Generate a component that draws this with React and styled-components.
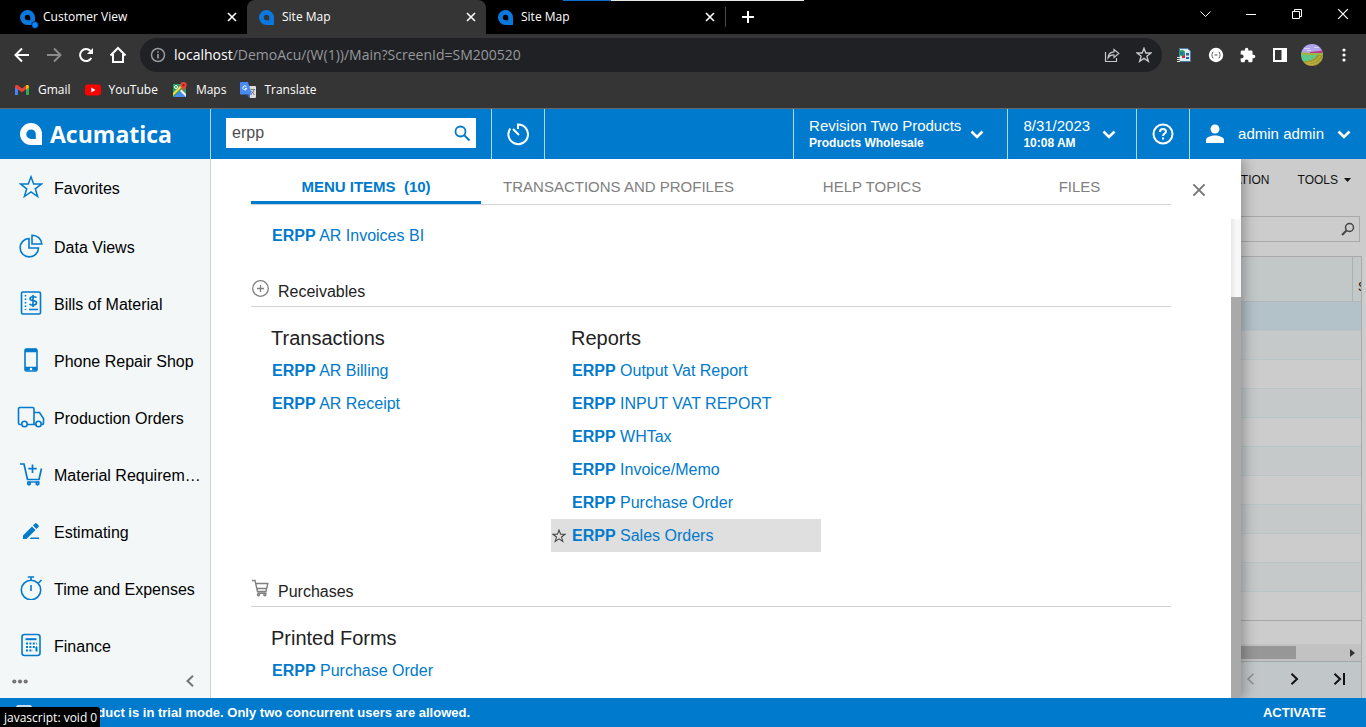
import React from "react";
import styled, { createGlobalStyle } from "styled-components";

const blue = "#007acc";
const uiFont = `"Open Sans", "Noto Sans", sans-serif`;
const appFont = `"Liberation Sans", Arial, sans-serif`;

const GlobalStyle = createGlobalStyle`
  *, *::before, *::after { box-sizing: border-box; }
  body { margin: 0; background: #fff; font-family: ${appFont}; }
  button { border: 0; padding: 0; margin: 0; background: none; font: inherit; color: inherit; cursor: pointer; }
  a { color: inherit; text-decoration: none; }
  svg { display: block; flex: none; }
  ul { list-style: none; margin: 0; padding: 0; }
`;

const Window = styled.div`
  position: relative;
  display: flex;
  flex-direction: column;
  height: 100vh;
  overflow: hidden;
`;

/* ---------- Browser frame ---------- */

const TabStrip = styled.div`
  display: flex;
  height: 34px;
  flex: none;
  background: #000;
  color: #fff;
  font: 12px/16px ${uiFont};
`;

const BrowserTab = styled.div`
  display: flex;
  align-items: center;
  gap: 8px;
  width: 239px;
  padding: 0 10px 0 12px;
  background: ${(p) => (p.$active ? "#353535" : "#000")};
  border-radius: ${(p) => (p.$active ? "8px 8px 0 0" : "0")};
  &:first-child { width: 247px; padding-left: 20px; }
`;

const TabTitle = styled.span`
  flex: 1;
  white-space: nowrap;
`;

const NewTab = styled.button`
  display: flex;
  align-items: center;
  justify-content: center;
  width: 44px;
  height: 20px;
  margin-top: 7px;
  border-left: 1px solid #4a4a4a;
`;

const WindowControls = styled.div`
  display: flex;
  height: 28px;
  margin-left: auto;
`;

const WindowControl = styled.button`
  display: flex;
  align-items: center;
  justify-content: center;
  width: 46px;
`;

const DragBar = styled.div`
  position: absolute;
  top: 0;
  left: 563px;
  width: 241px;
  height: 1px;
  background: linear-gradient(to right, #0a6fd0 20%, #e6e6e6 20%);
`;

const Toolbar = styled.div`
  display: flex;
  align-items: center;
  flex: none;
  height: 42px;
  padding: 0 6px;
  background: #353535;
  color: #fff;
`;

const ToolButton = styled.button`
  display: flex;
  align-items: center;
  justify-content: center;
  width: 32px;
  height: 32px;
  color: ${(p) => (p.$dim ? "#8b8b8b" : p.$soft ? "#c4c6c9" : "#fff")};
`;

const AddressBar = styled.div`
  display: flex;
  align-items: center;
  flex: 1;
  height: 34px;
  margin: 0 6px;
  padding: 0 2px 0 10px;
  border-radius: 17px;
  background: #202124;
  color: #96999d;
  font: 14px/20px ${uiFont};
`;

const Url = styled.span`
  flex: 1;
  margin-left: 8px;
  white-space: nowrap;
  b { color: #fff; font-weight: 400; }
`;

const Bookmarks = styled.nav`
  display: flex;
  align-items: center;
  gap: 14px;
  flex: none;
  height: 33px;
  padding: 0 14px 5px;
  border-bottom: 1px solid #666;
  background: #353535;
  color: #fff;
  font: 12px/16px ${uiFont};
`;

const Bookmark = styled.a`
  display: flex;
  align-items: center;
  gap: 8px;
`;

/* ---------- Application header ---------- */

const Header = styled.header`
  position: relative;
  z-index: 2;
  display: flex;
  flex: none;
  height: 50px;
  background: ${blue};
  color: #fff;
`;

const Brand = styled.a`
  display: flex;
  align-items: center;
  gap: 8px;
  width: 211px;
  padding-left: 20px;
  border-right: 1px solid #b3d7f0;
  font: 700 23px/32px ${uiFont};
`;

const SearchCell = styled.form`
  display: flex;
  align-items: center;
  width: 281px;
  padding: 0 15px 2px;
  border-right: 1px solid #b3d7f0;
`;

const SearchField = styled.label`
  display: flex;
  align-items: center;
  width: 100%;
  height: 30px;
  padding: 0 5px 0 6px;
  background: #fff;
  color: ${blue};
`;

const SearchInput = styled.input`
  flex: 1;
  min-width: 0;
  padding: 0;
  border: 0;
  outline: 0;
  background: none;
  color: #4d4d4d;
  font: 16px/20px ${appFont};
`;

const IconCell = styled.button`
  display: flex;
  align-items: center;
  justify-content: center;
  width: 53px;
  border-right: 1px solid #b3d7f0;
`;

const MenuCell = styled.button`
  display: flex;
  align-items: center;
  gap: ${(p) => p.$gap}px;
  padding: 0 ${(p) => p.$right}px 0 15px;
  border-left: 1px solid #b3d7f0;
  font-size: 15px;
  line-height: 18px;
  text-align: left;
  white-space: nowrap;
  small { display: block; font-size: 12px; line-height: 16px; font-weight: 700; }
`;

const Spacer = styled.div`
  flex: 1;
`;

/* ---------- Left navigation ---------- */

const Main = styled.div`
  display: flex;
  flex: 1;
  min-height: 0;
`;

const Sidebar = styled.nav`
  position: relative;
  z-index: 2;
  display: flex;
  flex-direction: column;
  flex: none;
  width: 211px;
  border-right: 1px solid #cdd1d4;
  background: #f3f7f8;
`;

const NavItem = styled.a`
  display: flex;
  align-items: center;
  gap: 8px;
  height: 57px;
  padding: 0 6px 0 16px;
  color: #000;
  font-size: 16px;
  line-height: 20px;
  li:first-child & { height: 60px; }
  svg { color: ${blue}; margin-bottom: 4px; }
  span { overflow: hidden; white-space: nowrap; text-overflow: ellipsis; }
`;

const IconSlot = styled.div`
  display: flex;
  justify-content: center;
  flex: none;
  width: 30px;
`;

const SidebarFoot = styled.div`
  display: flex;
  justify-content: space-between;
  height: 12px;
  padding: 0 15px 0 12px;
  color: #757575;
`;

/* ---------- Search results panel ---------- */

const Panel = styled.section`
  position: relative;
  z-index: 1;
  display: flex;
  flex-direction: column;
  flex: 1;
  min-width: 0;
  background: #fff;
  box-shadow: 3px 0 12px rgba(0, 0, 0, 0.3);
`;

const PanelHead = styled.div`
  display: flex;
  flex: none;
  height: 60px;
  padding-left: 40px;
`;

const PanelTabs = styled.div`
  display: flex;
  flex: 1;
  height: 46px;
  border-bottom: 1px solid #d0d3d8;
`;

const PanelTab = styled.button`
  flex: ${(p) => p.$share} 1 0;
  padding-top: 12px;
  border-bottom: 3px solid ${(p) => (p.$active ? blue : "transparent")};
  color: ${(p) => (p.$active ? blue : "#808080")};
  font-size: 15px;
  font-weight: ${(p) => (p.$active ? 700 : 400)};
  white-space: pre;
`;

const ClosePanel = styled.button`
  display: flex;
  align-items: center;
  flex: none;
  width: 70px;
  height: 62px;
  padding-left: 21px;
  color: #777;
`;

const PanelBody = styled.div`
  display: flex;
  flex: 1;
  min-height: 0;
`;

const Results = styled.div`
  flex: 1;
  min-width: 0;
  overflow: hidden;
  padding: 0 60px 0 40px;
`;

const ScrollTrack = styled.div`
  width: 10px;
  padding-top: 78px;
  background: linear-gradient(to right, #e6e6e6, #f7f7f7 50%);
`;

const ScrollThumb = styled.div`
  height: 100%;
  background: #a9a9a9;
`;

const SectionTitle = styled.h2`
  display: flex;
  align-items: flex-end;
  gap: 8px;
  height: 55px;
  margin: 0;
  padding-bottom: 4px;
  border-bottom: 1px solid #d0d3d8;
  color: #222;
  font-size: 16px;
  line-height: 20px;
  font-weight: 400;
  svg { width: 19px; color: #808080; margin-bottom: 4px; }
`;

const Columns = styled.div`
  display: flex;
  gap: 30px;
`;

const Column = styled.div`
  width: 270px;
`;

const ColumnTitle = styled.h3`
  height: 47px;
  margin: 0;
  padding: 19px 0 0 20px;
  color: #222;
  font-size: 20px;
  line-height: 24px;
  font-weight: 400;
`;

const ResultLink = styled.a`
  display: flex;
  align-items: center;
  height: 33px;
  padding-left: ${(p) => (p.$hover ? 1 : 21)}px;
  background: ${(p) => (p.$hover ? "#dfdfdf" : "none")};
  color: ${blue};
  font-size: 16px;
  line-height: 20px;
  white-space: pre;
  svg { margin-right: 6px; color: #444; }
`;

/* ---------- Dimmed screen behind the panel ---------- */

const Backdrop = styled.aside`
  display: flex;
  flex-direction: column;
  flex: none;
  width: 125px;
  padding-right: 4px;
  overflow: hidden;
  background: #ccc;
  color: #111;
  font-size: 12px;
`;

const BackdropTools = styled.div`
  display: flex;
  align-items: center;
  justify-content: flex-end;
  gap: 28px;
  height: 41px;
  padding-right: 11px;
`;

const BackdropTool = styled.button`
  display: flex;
  align-items: center;
  gap: 6px;
`;

const BackdropSearch = styled.div`
  display: flex;
  align-items: center;
  justify-content: flex-end;
  flex: none;
  height: 26px;
  margin: 16px 2px 14px 0;
  padding-right: 4px;
  border: 1px solid #a9a9a9;
  border-left: 0;
  color: #444;
`;

const Grid = styled.div`
  display: flex;
  flex-direction: column;
  flex: 1;
  border-top: 1px solid #a9a9a9;
  border-right: 1px solid #a9a9a9;
`;

const GridHead = styled.div`
  display: flex;
  justify-content: flex-end;
  height: 45px;
  background: #c2c7c8;
  border-bottom: 1px solid #b1b8bc;
`;

const GridHeadCell = styled.div`
  width: 9px;
  padding: 23px 0 0 5px;
  overflow: hidden;
  border-left: 1px solid #acb2b4;
`;

const GridRow = styled.div`
  height: 29px;
  border-bottom: 1px solid #b9c4c9;
  background: ${(p) => p.$tone};
  &:nth-child(12) { border-color: #a4a7a9; }
`;

const HScroll = styled.div`
  display: flex;
  align-items: center;
  justify-content: space-between;
  height: 17px;
  margin-top: 23px;
  padding-right: 6px;
  background: #c2c2c2;
`;

const HThumb = styled.div`
  width: 55px;
  height: 13px;
  background: #979797;
`;

const Pager = styled.div`
  display: flex;
  align-items: center;
  justify-content: space-between;
  flex: 1;
  padding: 0 15px 2px 5px;
  border-top: 1px solid #a4a7a9;
  background: #c1c6c8;
`;

/* ---------- Footer ---------- */

const TrialBar = styled.footer`
  position: relative;
  z-index: 2;
  display: flex;
  align-items: center;
  flex: none;
  gap: 14px;
  height: 29px;
  padding: 0 40px 0 16px;
  background: ${blue};
  color: #fff;
  font-size: 13px;
  font-weight: 700;
`;

const TrialText = styled.span`
  flex: 1;
`;

const StatusBubble = styled.div`
  position: absolute;
  z-index: 3;
  left: 0;
  bottom: 0;
  width: 100px;
  height: 20px;
  padding: 3px 0 0 4px;
  border-radius: 0 3px 0 0;
  background: #000;
  color: #fff;
  font: 12px/16px ${uiFont};
  white-space: nowrap;
`;

/* ---------- Icons ---------- */

const Icon = ({ w = 16, h = w, box = `0 0 ${w} ${h}`, sw = 1.5, fill = "none", children }) => (
  <svg width={w} height={h} viewBox={box} fill={fill} stroke={fill === "none" ? "currentColor" : "none"} strokeWidth={sw} aria-hidden="true">
    {children}
  </svg>
);

const Drop = ({ size, color, dot, small }) => (
  <svg width={size} height={size} viewBox="0 0 22 22" overflow="visible" aria-hidden="true">
    <path
      fill={color}
      fillRule="evenodd"
      d={small
        ? "M11 0a11 11 0 0 0 0 22h11V11A11 11 0 0 0 11 0zM11 7a4 4 0 0 1 4 4v4h-4a4 4 0 0 1 0-8z"
        : "M11 0a11 11 0 0 0 0 22h11V11A11 11 0 0 0 11 0zM11 6.500a4.700 4.700 0 0 1 4.800 4.700V16H11a4.700 4.700 0 0 1 0-9.500z"}
    />
    {dot && <circle cx="22" cy="22" r="5" fill="#0a84ff" stroke="#000" strokeWidth="1" />}
  </svg>
);

const Cross = ({ s = 10, sw = 1.6 }) => (
  <Icon w={s} box="0 0 10 10" sw={sw}><path d="M1 1l8 8M9 1L1 9" /></Icon>
);

const Chevron = () => (
  <Icon w={14} h={9} sw={2.6}><path d="M1.500 1.500L7 7l5.500-5.500" /></Icon>
);

const Star = ({ s, sw = 1.5 }) => (
  <Icon w={s} box="0 0 24 24" sw={sw}>
    <path d="M12 1.800l2.700 7.200h7.700l-6.100 4.800 2.300 7.700L12 17l-6.600 4.500 2.300-7.700L1.600 9h7.700z" />
  </Icon>
);

const navItems = [
  ["Favorites", <Star s={24} />],
  ["Data Views", (
    <Icon w={24} sw={1.6}>
      <path d="M10 4.500A9.200 9.200 0 1 0 19.500 14H10z" />
      <path d="M13 1.200V10h9.800A9.500 9.500 0 0 0 13 1.200z" />
    </Icon>
  )],
  ["Bills of Material", (
    <Icon w={24} sw={1.6}>
      <rect x="2.500" y="1" width="19" height="22" rx="1.500" />
      <path d="M6.500 4v15" strokeDasharray="1.500 2" />
      <path d="M17.500 6.500c-1-1-6.500-1.500-6.500 1.200 0 2.800 6.500 1 6.500 4s-5.500 2.800-7 1.300M14 4v12M10 18.500h9" />
    </Icon>
  )],
  ["Phone Repair Shop", (
    <Icon w={24} sw={1.6}>
      <rect x="6" y="1" width="12" height="22" rx="1.500" />
      <path d="M6 2.500h12M6 20.500h12" strokeWidth="3.600" />
      <circle cx="12" cy="21" r="1.300" fill="#fff" stroke="none" />
    </Icon>
  )],
  ["Production Orders", (
    <Icon w={28} h={22} sw={1.6}>
      <path d="M4.500 18.500H3a1.500 1.500 0 0 1-1.500-1.500V3A1.500 1.500 0 0 1 3 1.500h12.500A1.500 1.500 0 0 1 17 3v15.500h-7M17 6.500h5.500l4 6V17a1.500 1.500 0 0 1-1.500 1.500M17 18.500h2.500" />
      <circle cx="7.500" cy="18" r="2.700" /><circle cx="21.500" cy="18" r="2.700" />
    </Icon>
  )],
  ["Material Requirements", (
    <Icon w={24} sw={1.7}>
      <path d="M1 2h4l3.500 15.500h11.500L22.500 6.500M13.500 2.500v8.500M9.300 6.700h8.400" />
      <path d="M8.500 20h12" strokeWidth="1.400" />
      <circle cx="10" cy="21.500" r="1.300" /><circle cx="18.500" cy="21.500" r="1.300" />
    </Icon>
  )],
  ["Estimating", (
    <Icon w={24} fill="currentColor">
      <path d="M4 20v-3.500L13 7.500l3.500 3.500L7.500 20zM14 6.500l2-2a1.200 1.200 0 0 1 1.700 0l1.800 1.800a1.200 1.200 0 0 1 0 1.700l-2 2zM12 18.500h8V20h-9.500z" />
    </Icon>
  )],
  ["Time and Expenses", (
    <Icon w={24} sw={1.6}>
      <circle cx="12" cy="14" r="9.700" />
      <path d="M12 4.500V1M8.800 1h6.400M12 9v6M19.500 7l3-3" />
    </Icon>
  )],
  ["Finance", (
    <Icon w={24} sw={1.6}>
      <rect x="3" y="1.500" width="18" height="21" rx="2.500" />
      <path d="M6.500 6.200h11" strokeWidth="2" />
      <path d="M7 10.500h11M7 14h11M7 17.500h7" strokeDasharray="2 1.400" strokeWidth="2" />
      <path d="M17.500 14v4.500" strokeWidth="2" />
    </Icon>
  )],
];

const bookmarks = [
  ["Gmail", (
    <svg key="g" width="16" height="16" viewBox="0 0 16 16">
      <path fill="#4285f4" d="M1 5v8h3V7z" /><path fill="#34a853" d="M15 5v8h-3V7z" />
      <path fill="#ea4335" d="M1 4.500C1 2.800 2.800 2.500 3.800 3.300L8 6.500l4.200-3.200V7L8 10.300 1 5.500z" />
      <path fill="#fbbc04" d="M12 3.400c1.200-1 3-.4 3 1.200v1L12 7.500z" />
    </svg>
  )],
  ["YouTube", (
    <svg key="y" width="16" height="16" viewBox="0 0 16 16">
      <rect y="2.500" width="16" height="11" rx="3" fill="#f00" /><path fill="#fff" d="M6.300 5.600v4.800L10.500 8z" />
    </svg>
  )],
  ["Maps", (
    <svg key="m" width="16" height="16" viewBox="0 0 16 16">
      <path fill="#1fa463" d="M1 2h13v13H1z" /><path fill="#4a8af4" d="M2 15l6-6 6 6z" />
      <path fill="#ffd54b" d="M10 2L1 11v3l12-12z" /><path fill="#f5f5f5" d="M8 9l1.500-1.500L14 12v3z" />
      <path fill="#ea4335" d="M11.500 0a3.200 3.200 0 0 1 3.200 3.300c0 2.400-2.500 3.500-3.200 6.500-.7-3-3.200-4.100-3.200-6.500A3.200 3.200 0 0 1 11.500 0z" />
      <circle cx="11.500" cy="3.200" r="1.100" fill="#8c1a12" /><circle cx="4" cy="5" r="1.500" fill="none" stroke="#fff" />
    </svg>
  )],
  ["Translate", (
    <svg key="t" width="16" height="16" viewBox="0 0 16 16">
      <path fill="#ddd" d="M6 4h9a1 1 0 0 1 1 1v10a1 1 0 0 1-1 1h-5z" /><path fill="#4889f4" d="M1 0h7l4 12.500H1a1 1 0 0 1-1-1V1a1 1 0 0 1 1-1z" />
      <path fill="#3762c8" d="M7 12.500h3.500L9 16z" />
      <path fill="none" stroke="#fff" d="M6.500 4.700a2 2 0 1 0 .3 1.700H5" /><path fill="none" stroke="#6b7a80" d="M10.500 7.500H15M14 7.500c0 2-2 4-3 4.500M11.500 9l3 4" />
    </svg>
  )],
];

const panelTabs = [
  ["MENU ITEMS  (10)", 230],
  ["TRANSACTIONS AND PROFILES", 275],
  ["HELP TOPICS", 232],
  ["FILES", 183],
];

const rowTone = (i) => (i === 0 ? "#b3c1c8" : i % 2 ? "#c5c9ca" : "#ccc");

function Result({ text, hover }) {
  return (
    <ResultLink href="#" $hover={hover}>
      {hover && <Star s={14} sw={1.8} />}
      <span><b>ERPP</b> {text}</span>
    </ResultLink>
  );
}

function ResultColumn({ title, items, hover }) {
  return (
    <Column>
      {title && <ColumnTitle>{title}</ColumnTitle>}
      {items.map((t) => <Result key={t} text={t} hover={t === hover} />)}
    </Column>
  );
}

function BrowserFrame() {
  return (
    <>
      <TabStrip>
        {["Customer View", "Site Map", "Site Map"].map((t, i) => (
          <BrowserTab key={i} $active={i === 1}>
            <Drop size={15} color="#0b78e0" dot={i === 0} small />
            <TabTitle>{t}</TabTitle>
            <button aria-label="Close tab"><Cross /></button>
          </BrowserTab>
        ))}
        <NewTab aria-label="New tab"><Icon w={12} sw={2}><path d="M6 0v12M0 6h12" /></Icon></NewTab>
        <WindowControls>
          <WindowControl aria-label="Search tabs"><Icon w={11} h={6} sw={1}><path d="M.5.500l5 5 5-5" /></Icon></WindowControl>
          <WindowControl aria-label="Minimize"><Icon w={10} h={1} sw={1}><path d="M0 .5h10" /></Icon></WindowControl>
          <WindowControl aria-label="Restore"><Icon w={10} sw={1}><path d="M.5 2.500h7v7h-7zM2.500 2.500v-2h7v7h-2" /></Icon></WindowControl>
          <WindowControl aria-label="Close"><Cross s={12} sw={1} /></WindowControl>
        </WindowControls>
      </TabStrip>
      <DragBar />
      <Toolbar>
        <ToolButton aria-label="Back"><Icon w={16} sw={2}><path d="M15 8H2M8 1.500L1.500 8 8 14.500" /></Icon></ToolButton>
        <ToolButton $dim aria-label="Forward"><Icon w={16} sw={2}><path d="M1 8h13M8 1.500L14.500 8 8 14.500" /></Icon></ToolButton>
        <ToolButton aria-label="Reload"><Icon w={16} sw={2}><path d="M13.300 11A6 6 0 1 1 12.500 4" /><path d="M15 1v6H9z" fill="currentColor" stroke="none" /></Icon></ToolButton>
        <ToolButton aria-label="Home"><Icon w={18} h={18} sw={2}><path d="M1.500 9.500L9 2l7.500 7.500M4 8v8h10V8" /></Icon></ToolButton>
        <AddressBar>
          <Icon w={16} sw={1.5}><circle cx="8" cy="8" r="6.500" /><path d="M8 7v4.500M8 4.300v1.500" strokeWidth="1.700" /></Icon>
          <Url><b>localhost</b>/DemoAcu/(W(1))/Main?ScreenId=SM200520</Url>
          <ToolButton $soft aria-label="Share">
            <Icon w={16} sw={1.2}><path d="M1.500 5v9.500h11V11M10 2.500l4.800 4-4.800 4V8c-2.500-.2-4.500.6-6 2.800C4.300 7.500 6 5 10 4.800z" /></Icon>
          </ToolButton>
          <ToolButton $soft aria-label="Bookmark"><Star s={16} sw={2} /></ToolButton>
        </AddressBar>
        <ToolButton aria-label="Web report">
          <svg width="16" height="16" viewBox="0 0 16 16">
            <path fill="#dcebf5" stroke="#4a7ba0" d="M3.500 1.500h8l3 2.500v10.500h-11z" />
            <path fill="#c03040" d="M6 6h3v5H6z" /><path fill="#2c5da8" d="M10 6h3v2.500h-3zM10 10h3v2h-3z" />
            <circle cx="6" cy="6" r="3" fill="#28a060" /><path d="M4 5h3v3H5z" fill="#2a6ad0" />
            <path d="M1 10.500h3M1 12.500h3M1 14.500h3" stroke="#e8e8c8" />
          </svg>
        </ToolButton>
        <ToolButton aria-label="JSON viewer">
          <svg width="16" height="16" viewBox="0 0 16 16">
            <circle cx="8" cy="8" r="7.200" fill="#fff" />
            <path fill="none" stroke="#555" strokeWidth="1" d="M5.500 5C3.500 5 5 7.500 3.500 8c1.500.500 0 3 2 3M10.500 5c2 0 .5 2.500 2 3-1.500.500 0 3-2 3M6.500 8h3" />
          </svg>
        </ToolButton>
        <ToolButton aria-label="Extensions">
          <Icon w={16} box="1 0 23 23" fill="#fff"><path d="M20.500 11H19V7a2 2 0 0 0-2-2h-4V3.500a2.500 2.500 0 0 0-5 0V5H4a2 2 0 0 0-2 2v3.800h1.500a2.700 2.700 0 0 1 0 5.400H2V20a2 2 0 0 0 2 2h3.800v-1.500a2.700 2.700 0 0 1 5.400 0V22H17a2 2 0 0 0 2-2v-4h1.500a2.500 2.500 0 0 0 0-5z" /></Icon>
        </ToolButton>
        <ToolButton aria-label="Side panel"><Icon w={14} sw={2}><path d="M1 1h12v12H1z" /><path d="M8.500 1H13v12H8.500z" fill="currentColor" stroke="none" /></Icon></ToolButton>
        <ToolButton aria-label="Profile">
          <svg width="22" height="22" viewBox="0 0 22 22">
            <defs><clipPath id="face"><circle cx="11" cy="11" r="11" /></clipPath></defs>
            <g clipPath="url(#face)">
              <path fill="#b3a4ee" d="M0 0h22v9H0z" /><path fill="#d9d0f8" d="M3 4h6v1H3zM13 3h5v1h-5zM6 6h4v1H6z" />
              <path fill="#60c98a" d="M0 9h22v9H0z" /><path fill="#c23a78" d="M9 8l13-1.500V9H9z" />
              <path fill="#a6b23c" d="M0 9c6-1.500 9 1 22 .5V12C14 10 8 11.500 0 10.500z" />
              <path fill="#9e9a2e" d="M0 17c8 1 14-2 16-6h6v11H0z" /><path fill="none" stroke="#d2b84a" d="M2 19c8 1 15-2 17-7M5 21c8 0 13-2 15-6" />
            </g>
          </svg>
        </ToolButton>
        <ToolButton aria-label="Menu"><Icon w={4} h={16} fill="#fff"><circle cx="2" cy="3" r="1.600" /><circle cx="2" cy="8" r="1.600" /><circle cx="2" cy="13" r="1.600" /></Icon></ToolButton>
      </Toolbar>
      <Bookmarks>
        {bookmarks.map(([t, icon]) => <Bookmark key={t} href="#">{icon}{t}</Bookmark>)}
      </Bookmarks>
    </>
  );
}

export default function App() {
  return (
    <Window>
      <GlobalStyle />
      <BrowserFrame />
      <Header>
        <Brand href="#"><Drop size={22} color="#fff" />Acumatica</Brand>
        <SearchCell onSubmit={(e) => e.preventDefault()}>
          <SearchField>
            <SearchInput aria-label="Search" defaultValue="erpp" />
            <button aria-label="Search"><Icon w={17} sw={1.8}><circle cx="6.500" cy="6.500" r="5" /><path d="M10 10l5.500 5.500" strokeWidth="2" /></Icon></button>
          </SearchField>
        </SearchCell>
        <IconCell aria-label="History">
          <Icon w={24} sw={2}><path d="M12 7V2.500A9.800 9.800 0 1 1 4.300 6.500M7 7l6 6" /></Icon>
        </IconCell>
        <Spacer />
        <MenuCell $gap={9} $right={23}><span>Revision Two Products<small>Products Wholesale</small></span><Chevron /></MenuCell>
        <MenuCell $gap={12} $right={20}><span>8/31/2023<small>10:08 AM</small></span><Chevron /></MenuCell>
        <MenuCell $gap={0} $right={15} aria-label="Help">
          <Icon w={22} sw={2}><circle cx="11" cy="11" r="9.500" /><path d="M8 9c0-4 6-3.800 6-.5 0 2-3 2-3 4.500M11 14.500v2" /></Icon>
        </MenuCell>
        <MenuCell $gap={13} $right={15}>
          <Icon w={20} h={20} fill="#fff"><circle cx="10" cy="5" r="4.500" /><path d="M1 19v-3c0-3 5-4.500 9-4.500s9 1.500 9 4.500v3z" /></Icon>
          <span>admin admin</span><Chevron />
        </MenuCell>
      </Header>

      <Main>
        <Sidebar>
          <ul>
            {navItems.map(([t, icon]) => (
              <li key={t}><NavItem href="#"><IconSlot>{icon}</IconSlot><span>{t}</span></NavItem></li>
            ))}
          </ul>
          <SidebarFoot>
            <button aria-label="More items"><Icon w={16} h={5} fill="#757575"><circle cx="2.300" cy="2.500" r="2.100" /><circle cx="8" cy="2.500" r="2.100" /><circle cx="13.700" cy="2.500" r="2.100" /></Icon></button>
            <button aria-label="Collapse menu"><Icon w={10} h={12} sw={2}><path d="M8 .8L2.500 6 8 11.200" /></Icon></button>
          </SidebarFoot>
        </Sidebar>

        <Panel>
          <PanelHead>
            <PanelTabs>
              {panelTabs.map(([t, share], i) => <PanelTab key={t} $share={share} $active={i === 0}>{t}</PanelTab>)}
            </PanelTabs>
            <ClosePanel aria-label="Close"><Cross s={14} sw={1.4} /></ClosePanel>
          </PanelHead>
          <PanelBody>
            <Results>
              <ResultColumn items={["AR Invoices BI"]} />
              <SectionTitle>
                <Icon w={19} sw={1.3}><circle cx="9.500" cy="9.500" r="7.800" /><path d="M9.500 6v7M6 9.500h7" /></Icon>
                Receivables
              </SectionTitle>
              <Columns>
                <ResultColumn title="Transactions" items={["AR Billing", "AR Receipt"]} />
                <ResultColumn
                  title="Reports"
                  items={["Output Vat Report", "INPUT VAT REPORT", "WHTax", "Invoice/Memo", "Purchase Order", "Sales Orders"]}
                  hover="Sales Orders"
                />
              </Columns>
              <SectionTitle>
                <Icon w={19} sw={1.4}>
                  <path d="M1 1.500h3l2.500 11h8.500l1.800-8H5M6 9.500h9.500M6.500 14.300h9" />
                  <circle cx="7.500" cy="15.700" r="1" /><circle cx="13.800" cy="15.700" r="1" />
                </Icon>
                Purchases
              </SectionTitle>
              <ResultColumn title="Printed Forms" items={["Purchase Order"]} />
            </Results>
            <ScrollTrack><ScrollThumb /></ScrollTrack>
          </PanelBody>
        </Panel>

        <Backdrop>
          <BackdropTools>
            <BackdropTool>CUSTOMIZATION</BackdropTool>
            <BackdropTool>TOOLS<Icon w={7} h={4} fill="#111"><path d="M0 0h7L3.500 4z" /></Icon></BackdropTool>
          </BackdropTools>
          <BackdropSearch><Icon w={14} sw={1.5}><circle cx="8.500" cy="5.500" r="4" /><path d="M5.500 8.500L1 13" strokeWidth="2" /></Icon></BackdropSearch>
          <Grid>
            <GridHead><GridHeadCell>S</GridHeadCell></GridHead>
            {Array.from({ length: 11 }, (_, i) => <GridRow key={i} $tone={rowTone(i)} />)}
            <HScroll><HThumb /><Icon w={5} h={8} fill="#333"><path d="M0 0l5 4-5 4z" /></Icon></HScroll>
            <Pager>
              <button aria-label="Previous page"><Icon w={9} h={12} sw={1.5}><path d="M7.500.800L2 6l5.500 5.200" stroke="#8e8e8e" /></Icon></button>
              <button aria-label="Next page"><Icon w={9} h={12} sw={2}><path d="M1.500.800L7 6l-5.500 5.200" /></Icon></button>
              <button aria-label="Last page"><Icon w={13} h={12} sw={2}><path d="M1.500.800L7 6l-5.500 5.200M11 0v12" /></Icon></button>
            </Pager>
          </Grid>
        </Backdrop>
      </Main>

      <TrialBar>
        <Icon w={16} h={16}><rect x="1" y="1" width="14" height="13" rx="1" /></Icon>
        <TrialText>This product is in trial mode. Only two concurrent users are allowed.</TrialText>
        <button>ACTIVATE</button>
      </TrialBar>
      <StatusBubble>javascript: void 0</StatusBubble>
    </Window>
  );
}
